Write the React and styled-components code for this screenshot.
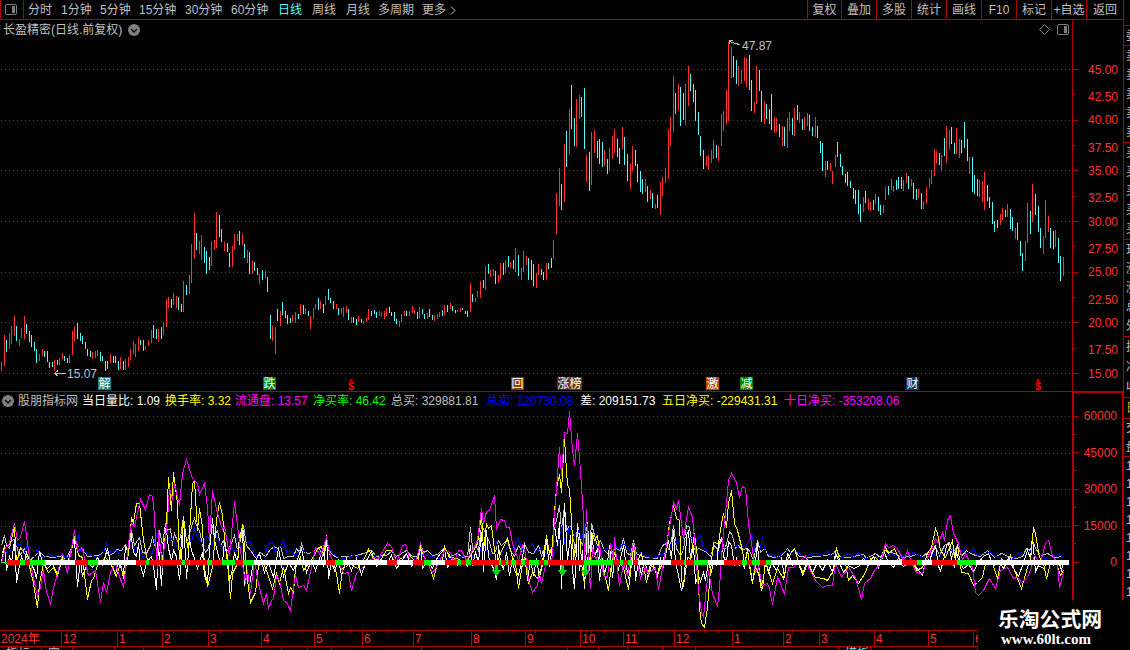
import * as React from "react"
import styled, { createGlobalStyle } from "styled-components"

// c = falling, r = rising: x,high,low
const BARS = `r1,362,371 r4,335,366 c6,340,352 r9,333,349 r11,326,344 r14,316,336 c16,326,341 r19,339,346 r21,328,338 r24,316,339
c26,324,334 c29,331,342 c31,335,347 c34,342,351 c36,349,363 r39,354,361 r42,349,356 c44,351,357 c47,351,362 c49,362,368
c52,362,367 r54,360,371 c57,360,365 r59,358,365 r62,353,359 c64,356,361 c67,358,363 r69,355,363 r72,331,355 r74,326,341
c77,323,339 c80,333,341 c82,336,344 c85,342,349 c87,349,356 c90,351,357 r92,352,359 r95,351,358 r97,350,356 c100,352,361
c102,356,361 c105,361,371 c107,361,369 r110,354,363 c113,356,363 c115,356,363 c118,361,370 r120,357,369 c123,361,370 r125,359,370
r128,357,367 r130,349,360 r133,341,354 r135,344,357 r138,337,351 c140,340,345 c143,340,351 r145,346,350 r148,340,346 r151,330,343
c153,325,338 c156,329,339 r158,329,342 c161,327,339 r163,322,335 r166,299,327 r168,297,308 c171,299,308 r173,293,305 r176,296,308
c178,297,310 c181,304,312 r183,281,312 c186,285,295 r189,275,294 r191,244,283 r194,213,259 c196,233,250 r199,241,254 r201,235,260
c204,247,263 c206,251,274 c209,257,270 r211,241,266 r214,240,250 r216,212,248 c219,215,237 c221,229,242 r224,242,251 c227,243,252
c229,253,267 r232,246,267 r234,234,250 r237,234,241 c239,231,245 r242,234,245 c244,244,258 r247,250,263 c249,252,274 r252,261,274
c254,262,271 c257,268,275 r259,274,284 c262,270,280 r265,271,278 c267,277,292 c270,315,339 r272,326,341 r275,327,354 c277,309,321
r280,311,326 c282,302,315 c285,311,318 c287,315,324 c290,318,323 r292,315,322 r295,312,323 c298,314,319 r300,304,315 c303,305,314
r305,308,314 c308,311,316 r310,316,329 r313,308,319 r315,304,309 c318,298,310 r320,301,309 c323,304,313 r325,296,305 c328,289,300
c330,298,303 c333,301,309 r336,304,309 c338,308,315 r341,308,314 r343,307,317 r346,306,313 c348,309,320 r351,317,323 c353,317,323
c356,319,325 r358,316,322 c361,319,323 r363,321,324 r366,318,322 r368,309,320 c371,311,316 c374,310,314 c376,312,318 r379,311,316
r381,312,317 r384,311,319 r386,308,316 c389,307,313 c391,312,316 c394,312,321 c396,319,324 r399,321,327 r401,314,322 r404,311,316
c406,311,316 r409,311,316 r412,306,313 r414,310,314 c417,312,319 r419,307,318 c422,309,314 c424,314,319 r427,313,319 c429,309,317
c432,315,320 r434,315,321 r437,314,319 r439,312,317 c442,310,316 r444,305,315 c447,305,312 r450,303,309 c452,306,311 c455,310,313
r457,310,312 r460,308,312 c462,308,310 c465,311,314 c467,311,317 r470,283,312 c472,294,302 r475,298,302 r477,291,297 r480,281,298
c483,280,288 r485,266,290 c488,264,274 r490,270,277 r493,269,276 c495,271,284 r498,275,283 r500,263,279 c503,263,275 r505,260,273
c508,256,267 r510,262,268 c513,260,269 r515,248,272 c518,255,276 r521,268,280 r523,251,272 r526,256,265 c528,258,280 c531,260,280
c533,264,286 r536,273,288 r538,264,275 c541,269,275 c543,272,280 r546,263,280 c548,263,269 c551,258,268 r553,240,259 r556,193,234
r559,168,206 c561,184,210 r564,144,202 c566,131,167 r569,109,155 c571,85,129 c574,118,146 r576,99,147 r579,95,119 c581,97,117
c584,88,149 r586,155,182 c589,152,191 r591,132,185 r594,130,153 c597,141,158 c599,139,164 c602,142,167 r604,150,166 c607,159,174
r609,148,171 r612,136,159 r614,129,153 c617,139,157 c619,148,164 r622,127,149 c624,137,165 c627,154,181 r630,164,189 r632,146,171
c635,150,166 c637,164,182 c640,171,192 c642,179,194 r645,179,192 c647,186,202 r650,190,199 c652,193,208 r655,204,209 c657,195,208
r660,182,215 r662,177,196 r665,168,183 r668,129,179 r670,117,146 r673,76,132 c675,93,114 r678,84,111 c680,87,126 c683,93,120
r685,84,125 r688,66,106 c690,74,91 c693,84,102 c695,90,121 c698,112,135 c700,136,156 c703,150,169 r706,156,166 r708,155,170
r711,150,163 r713,140,159 c716,145,158 r718,146,161 r721,114,146 r723,111,131 r726,90,125 r728,42,121 r731,47,78 c733,56,77
c736,60,84 r738,66,86 r741,70,84 r744,57,81 r746,58,87 c749,55,90 c751,80,111 r754,102,113 r756,66,104 c759,70,91
c761,91,122 r764,101,124 c766,104,119 c769,109,124 c771,94,130 r774,117,133 r776,118,132 c779,124,137 r782,126,146 c784,127,146
r787,118,148 r789,112,131 c792,118,135 r794,108,136 c797,105,120 r799,112,123 c802,119,130 r804,117,130 r807,113,126 c809,115,131
c812,127,136 r815,117,137 c817,126,138 c820,141,153 c822,143,171 r825,161,177 c827,161,170 r830,163,171 r832,171,184 r835,155,167
c837,142,157 c840,154,167 c842,166,175 c845,174,183 c847,172,186 c850,181,188 c853,188,199 c855,190,204 c858,190,214 c860,204,222
r863,197,212 c865,191,203 r868,199,210 r870,202,211 c873,200,210 r875,194,204 c878,197,211 c880,205,215 r883,205,213 r885,187,200
c888,186,195 r891,179,190 r893,186,192 c896,180,190 c898,177,189 c901,177,189 r903,180,191 r906,173,183 c908,176,189 r911,179,186
c913,183,199 c916,189,200 r918,189,198 c921,193,209 r923,201,209 r926,187,204 r929,178,188 r931,170,184 r934,149,176 r936,151,163
c939,153,165 r941,155,171 c944,138,156 r946,126,163 r949,130,149 c951,127,144 c954,143,154 r956,128,154 r959,139,158 c961,140,153
c964,122,148 c967,139,161 r969,157,174 c972,157,192 c974,175,194 c977,179,196 r979,180,197 r982,181,202 r984,172,210 c987,185,201
c989,197,208 c992,202,224 c994,221,232 c997,220,228 r1000,214,225 r1002,208,220 c1005,210,217 r1007,204,217 c1010,209,229 c1012,217,231
r1015,228,239 c1017,223,240 c1020,241,256 c1022,253,271 r1025,241,261 r1027,203,243 c1030,211,234 r1032,184,222 c1035,194,215 c1038,206,232
c1040,228,248 r1043,236,254 r1045,200,238 r1048,216,232 c1050,228,248 c1053,231,249 r1055,230,247 c1058,238,263 c1060,256,281 r1063,257,276`
  .split(/\s+/)
  .map(s => {
    const [x, high, low] = s.slice(1).split(",").map(Number)
    return { up: s[0] === "r", x, high, low }
  })

const LINES = [
  {
    name: "buy",
    color: "#c0c0c0",
    points:
      "1,545 4,535 6,545 9,548 11,540 14,539 16,545 19,555 24,548 29,560 34,556 39,551 44,556 52,557 60,556 67,556 72,545 74,537 77,545 82,548 87,556 97,555 102,553 105,548 108,555 113,553 116,549 121,550 125,544 128,552 131,530 134,545 137,540 139,537 142,552 146,553 150,545 152,536 154,545 157,550 159,530 162,545 165,523 167,530 170,528 172,545 174,533 177,541 180,537 183,516 185,535 187,540 190,530 192,523 194,518 196,525 199,530 202,545 205,552 208,548 212,525 214,535 217,530 220,545 223,540 226,552 230,545 234,535 237,550 240,540 243,525 246,545 250,550 255,557 260,552 265,556 270,549 274,546 277,548 280,545 283,558 288,556 293,556 296,548 299,552 301,543 304,552 309,553 314,550 319,548 322,555 326,536 328,548 331,553 336,557 346,556 356,555 366,552 371,550 376,556 386,555 391,551 396,556 401,553 406,550 412,556 417,556 420,544 423,552 427,550 432,555 437,554 444,547 450,556 457,553 462,557 467,556 470,527 472,548 475,545 478,550 481,525 484,530 486,535 489,542 492,553 495,552 498,540 501,545 504,542 507,540 510,550 514,556 518,545 521,550 524,543 528,552 533,553 538,545 541,555 546,540 549,552 552,545 554,525 556,520 559,505 561,530 564,505 566,530 569,525 572,530 575,552 577,523 579,535 582,545 584,535 587,525 589,548 591,523 594,535 597,545 600,540 604,550 609,555 615,548 620,550 623,538 626,552 630,555 633,540 636,553 641,556 648,557 657,558 662,545 666,543 668,548 671,540 673,525 676,548 680,555 683,550 686,525 689,527 692,545 695,550 698,548 703,550 706,552 710,556 714,545 718,550 721,538 724,550 727,540 729,531 732,535 735,548 738,545 742,550 745,548 749,550 753,560 757,540 760,552 764,548 768,556 775,557 781,555 787,548 790,552 794,550 799,556 808,557 816,556 826,555 833,553 836,549 839,556 848,557 858,555 863,554 866,558 875,553 880,557 884,550 890,552 895,553 901,557 910,556 916,554 922,556 927,552 932,553 935,546 939,555 944,545 947,543 949,542 952,555 957,545 961,556 966,550 972,554 980,556 987,550 994,557 1001,553 1008,556 1016,558 1022,556 1026,548 1030,550 1032,540 1035,548 1040,555 1047,553 1054,557 1063,556",
  },
  {
    name: "sell",
    color: "#0000ff",
    points:
      "1,550 5,553 9,550 13,549 17,543 21,545 23,553 27,545 31,548 34,551 37,549 40,555 44,557 48,553 53,556 60,555 68,557 73,542 75,545 78,534 80,550 84,551 87,553 91,554 95,557 100,555 103,552 106,543 108,552 112,551 116,550 120,555 124,551 127,547 131,540 135,552 138,548 142,557 147,553 152,553 154,540 157,532 160,547 165,540 169,537 173,540 177,547 180,545 183,533 187,542 192,538 194,528 197,537 202,543 207,535 211,547 215,533 218,540 223,550 227,552 230,545 235,552 239,547 242,542 245,543 250,541 254,555 260,557 265,552 268,543 272,542 275,552 279,547 283,540 286,552 290,550 295,555 300,550 303,550 308,555 312,551 317,550 322,553 327,545 332,553 338,557 345,558 353,555 362,558 368,557 377,555 383,557 390,557 400,557 407,556 415,558 419,555 423,553 428,555 437,558 447,558 457,557 467,555 477,557 482,543 485,548 490,555 496,542 500,553 504,551 507,547 513,548 518,538 523,552 528,547 532,543 535,552 542,547 547,555 553,555 557,543 562,525 565,547 569,525 573,537 577,528 581,540 584,527 587,535 590,546 593,537 598,552 603,550 608,547 613,543 618,548 623,543 627,547 632,553 637,550 643,555 650,557 657,556 663,553 668,547 673,540 677,543 682,533 687,537 692,538 696,540 700,535 703,547 708,553 715,555 722,547 727,547 733,547 740,545 745,547 748,540 752,535 755,555 759,550 762,537 765,552 770,555 777,557 785,550 788,553 795,550 802,555 807,555 815,553 822,555 827,550 832,557 835,555 840,557 848,553 853,557 858,552 863,558 873,557 883,558 890,553 897,557 907,555 913,552 922,557 930,553 937,555 945,552 952,550 958,553 964,548 970,552 973,548 977,555 983,553 990,552 997,557 1005,557 1012,558 1020,552 1027,555 1032,547 1037,552 1043,558 1052,557 1060,554 1063,558",
  },
  {
    name: "diff",
    color: "#ffffff",
    points:
      "1,562 4,545 6,570 9,556 11,562 14,540 16,582 19,565 21,556 24,563 26,552 29,560 34,570 36,578 39,551 42,562 47,568 52,563 57,574 62,556 67,563 72,545 74,540 77,586 80,560 82,576 87,562 92,567 97,557 102,565 107,548 110,563 115,574 118,560 123,575 125,545 128,553 130,530 133,552 136,556 138,543 140,565 143,575 146,562 151,556 153,566 156,589 158,545 161,585 163,545 166,530 168,548 171,560 173,550 176,556 179,579 181,560 183,517 186,578 189,538 191,550 194,558 197,568 199,561 202,552 204,575 207,583 209,550 212,518 214,540 216,547 219,560 222,562 224,540 227,556 229,581 232,568 234,552 237,562 239,535 242,528 244,585 247,570 249,585 252,566 254,562 259,553 264,572 268,562 273,577 278,548 283,576 288,562 293,570 298,556 301,548 306,572 311,560 315,570 320,555 323,566 326,535 328,578 331,562 334,570 338,560 341,575 346,558 351,570 356,558 361,574 366,560 371,551 376,566 381,559 386,564 391,555 396,568 401,561 406,553 411,566 416,560 420,545 422,568 427,560 432,568 437,557 444,548 447,567 452,558 457,565 462,560 467,566 470,545 472,565 475,552 478,562 481,532 483,571 486,530 488,556 490,562 493,568 496,579 498,545 500,562 503,568 506,552 509,575 512,558 514,570 518,575 521,562 524,545 527,580 530,560 533,575 536,558 539,577 543,560 546,540 549,566 552,545 554,525 557,545 559,522 561,588 564,503 567,560 570,535 572,568 574,588 577,525 579,570 582,550 584,588 587,522 589,568 591,532 594,556 597,548 599,580 602,558 604,573 607,562 609,545 612,577 615,552 618,570 620,558 623,545 625,560 628,578 631,562 633,540 635,580 638,562 641,574 644,560 648,575 652,562 657,577 660,558 663,566 666,550 668,540 671,558 673,530 675,562 678,575 681,590 684,578 686,535 688,530 690,560 693,545 695,583 698,575 700,581 703,572 705,580 708,562 711,572 713,560 716,565 718,545 721,537 723,556 726,562 728,541 731,545 734,565 736,558 739,565 742,560 744,568 747,548 750,572 752,583 755,562 757,542 759,575 762,588 765,560 768,572 771,562 776,570 781,558 784,577 787,553 789,556 792,565 797,560 802,574 807,560 812,572 817,562 822,570 827,560 832,572 835,552 838,560 843,572 848,565 853,568 858,566 863,558 868,564 873,556 878,567 883,550 888,562 893,567 898,558 903,566 911,560 918,570 922,575 926,555 929,562 932,550 935,545 938,566 940,570 943,560 946,545 948,543 951,558 954,567 956,552 959,562 963,568 968,564 973,571 978,562 983,556 988,553 993,566 998,560 1003,568 1008,558 1013,568 1018,576 1022,565 1027,550 1030,558 1032,535 1035,571 1038,565 1043,568 1048,560 1053,565 1058,560 1061,570 1063,562",
  },
  {
    name: "net5",
    color: "#ffff00",
    points:
      "1,553 5,547 10,543 14,527 16,563 20,547 24,553 27,558 30,570 33,583 37,607 39,583 43,563 48,572 53,567 57,575 62,558 68,563 74,537 78,555 82,557 87,599 91,580 93,578 97,565 105,557 110,563 116,575 120,563 123,578 128,553 131,518 133,522 136,503 139,503 143,540 147,560 152,562 156,560 158,535 162,562 166,523 168,477 171,510 173,472 177,503 179,565 183,517 186,540 188,550 191,500 192,483 194,480 197,530 199,508 202,527 204,567 207,586 212,567 216,520 219,502 222,515 224,537 227,563 230,598 232,573 237,563 239,543 242,524 245,557 247,580 250,602 255,592 258,565 263,563 267,573 272,588 276,573 279,583 283,567 288,593 290,587 293,592 295,567 300,557 303,570 308,563 314,555 317,548 321,546 323,555 326,537 329,553 333,562 336,573 339,593 342,568 345,567 349,563 357,568 363,560 368,549 373,558 380,560 386,550 392,550 396,561 402,557 407,552 412,558 417,563 420,546 424,558 428,563 433,578 437,563 442,560 444,546 449,557 457,558 465,563 472,552 477,543 481,513 483,550 486,523 488,528 491,525 494,550 496,565 500,553 507,538 512,557 515,563 518,588 522,563 524,557 528,583 532,572 537,578 541,567 546,535 549,553 552,547 553,523 556,488 559,474 561,492 563,453 564,439 567,485 569,488 572,537 573,560 577,533 579,533 582,573 584,583 587,557 589,570 592,533 594,540 597,535 600,563 604,573 608,590 611,563 614,553 618,562 623,567 628,589 633,547 637,560 641,553 646,582 650,563 657,573 662,563 666,547 669,523 673,505 676,518 679,520 681,580 683,585 687,557 690,558 694,533 697,557 699,607 701,623 704,627 707,607 710,570 713,542 718,543 721,523 723,513 726,527 728,503 731,490 734,523 737,530 742,550 744,563 747,550 752,582 755,567 758,573 761,590 765,563 768,570 772,583 777,568 783,578 787,560 790,553 794,548 798,562 803,573 807,563 815,577 823,578 827,580 833,570 836,547 839,560 845,563 848,580 852,575 858,583 865,572 870,558 875,557 880,563 885,547 888,553 894,548 898,557 905,563 911,560 916,570 922,567 927,553 931,547 935,528 937,533 940,550 945,557 952,540 954,557 957,545 961,572 968,573 973,585 977,582 982,577 985,563 992,563 997,578 1001,558 1007,563 1010,555 1014,570 1021,588 1027,567 1030,560 1033,527 1035,533 1039,557 1043,563 1046,578 1050,563 1055,560 1060,575 1063,570",
  },
  {
    name: "net10",
    color: "#ff00ff",
    points:
      "1,562 5,547 8,545 14,523 17,540 20,537 22,528 24,521 29,557 32,573 37,596 40,587 43,569 45,587 50,604 53,587 57,573 62,553 67,573 70,553 74,530 77,550 82,548 85,563 88,575 95,570 100,602 103,582 106,592 110,572 115,563 118,573 123,587 128,543 131,522 134,526 140,499 145,509 149,494 152,496 154,515 155,540 157,568 158,530 161,557 162,567 163,553 167,520 169,487 172,500 174,483 179,505 182,473 186,459 192,478 197,483 199,494 204,483 207,507 209,540 212,490 217,513 222,529 224,526 229,555 234,501 240,550 245,583 247,570 250,593 254,560 258,583 263,603 266,593 268,608 271,600 273,598 276,575 279,580 283,600 287,603 290,611 293,587 295,575 298,587 303,585 306,590 311,567 315,547 320,555 326,537 329,552 333,563 340,565 343,573 348,572 351,590 356,573 365,564 373,557 378,558 387,543 391,546 396,563 402,545 405,544 409,558 415,563 420,543 424,557 432,572 437,565 444,550 450,552 453,563 458,550 461,550 466,560 472,550 477,540 481,508 483,523 486,511 489,510 494,495 496,529 500,519 504,520 506,527 509,527 512,543 518,560 522,545 525,553 528,580 532,592 537,585 539,573 541,583 545,565 548,562 552,557 554,517 559,447 561,475 564,432 567,433 569,411 572,450 574,465 577,433 580,470 583,517 584,567 586,509 588,567 590,588 592,547 596,560 599,543 603,575 607,577 610,543 613,560 614,537 617,570 619,585 623,563 627,575 633,542 637,563 640,578 645,567 648,573 655,567 658,589 663,563 668,533 673,502 676,508 678,500 681,523 683,538 688,506 692,517 695,550 698,590 701,612 703,617 706,587 708,570 712,593 717,606 719,587 722,543 725,513 728,480 731,473 736,482 739,497 742,486 745,488 748,523 752,550 755,572 758,567 762,585 767,583 769,588 772,604 777,577 780,583 784,594 788,567 793,567 798,562 805,555 808,567 815,580 822,587 827,585 832,585 835,563 841,577 848,567 855,577 861,599 864,583 870,578 874,570 880,563 885,543 888,547 893,545 898,550 903,560 907,550 911,562 916,572 922,573 927,557 932,547 935,538 938,543 942,532 944,540 947,520 950,515 953,533 958,543 962,560 965,553 972,567 975,592 978,595 983,590 989,578 995,588 1000,570 1007,567 1013,578 1017,577 1021,582 1027,577 1031,567 1034,555 1040,563 1045,543 1048,540 1052,555 1057,563 1059,587 1063,572",
  },
]

// zero line ribbon, each run starts where the previous one ends
const RIBBON = [
  [7, "r"], [20, "g"], [25, "r"], [30, "g"], [45, "w"], [75, "r"], [88, "g"], [98, "w"], [136, "r"], [146, "g"],
  [149, "r"], [182, "g"], [185, "r"], [189, "g"], [190, "r"], [207, "g"], [212, "r"], [222, "g"], [235, "r"], [243, "g"],
  [254, "w"], [326, "r"], [335, "g"], [343, "w"], [387, "r"], [397, "w"], [413, "r"], [424, "g"], [431, "w"], [445, "r"],
  [457, "g"], [461, "r"], [466, "g"], [471, "r"], [499, "g"], [501, "r"], [506, "g"], [508, "r"], [511, "g"], [516, "r"],
  [521, "g"], [525, "r"], [529, "g"], [539, "r"], [544, "g"], [548, "r"], [584, "g"], [613, "r"], [620, "g"], [623, "r"],
  [628, "g"], [632, "w"], [633, "r"], [638, "w"], [671, "r"], [684, "g"], [686, "r"], [694, "g"], [708, "w"], [724, "r"],
  [742, "g"], [747, "r"], [752, "g"], [760, "r"], [766, "g"], [771, "w"], [902, "r"], [917, "g"], [922, "w"], [932, "r"],
  [957, "g"], [976, "w"], [1069, "w"],
]
const RIBBON_COLORS = { r: "#ff0000", g: "#00ff00", w: "#ffffff" }

const PERIODS = [
  ["分时", 33], ["1分钟", 39], ["5分钟", 39], ["15分钟", 46], ["30分钟", 46], ["60分钟", 47],
  ["日线", 34], ["周线", 34], ["月线", 32], ["多周期", 44], ["更多", 28],
]

const ACTIONS = [
  ["复权", 34], ["叠加", 35], ["多股", 35], ["统计", 35], ["画线", 35], ["F10", 35], ["标记", 35], ["+自选", 35], ["返回", 37],
]

const READINGS = [
  ["股朋指标网", "#c0c0c0", 64],
  ["当日量比: 1.09", "#ffffff", 83],
  ["换手率: 3.32", "#ffff00", 70],
  ["流通盘: 13.57", "#ff00ff", 78],
  ["净买率: 46.42", "#00ff00", 78],
  ["总买: 329881.81", "#c0c0c0", 95],
  ["总卖: 120730.08", "#0000ff", 94],
  ["差: 209151.73", "#ffffff", 82],
  ["五日净买: -229431.31", "#ffff00", 122],
  ["十日净买: -353208.06", "#ff00ff", 122],
]

const PRICES = [
  "45.00", "42.50", "40.00", "37.50", "35.00", "32.50", "30.00", "27.50", "25.00", "22.50", "20.00", "17.50", "15.00",
]
const VOLUMES = ["60000", "", "45000", "", "30000", "", "15000", "", "0"]

const BADGES = [
  ["解", 98, "#008080"], ["跌", 263, "#008000"], ["回", 511, "#804000"], ["涨", 557, "#602020"],
  ["榜", 569, "#604020"], ["激", 706, "#c04800"], ["减", 740, "#008000"], ["财", 906, "#003870"],
]

const MONTHS = [
  ["2024年", 0, 61], ["12", 61, 117], ["1", 117, 162], ["2", 162, 208], ["3", 208, 261], ["4", 261, 314],
  ["5", 314, 362], ["6", 362, 413], ["7", 413, 471], ["8", 471, 525], ["9", 525, 580], ["10", 580, 623],
  ["11", 623, 674], ["12", 674, 732], ["1", 732, 783], ["2", 783, 819], ["3", 819, 874], ["4", 874, 928],
  ["5", 928, 973], ["6", 973, 978],
]
const WEEK_TICKS = [
  75, 89, 103, 128, 140, 149, 173, 185, 198, 220, 235, 248, 274, 288, 301, 326, 338, 350, 375, 388, 400, 427, 442,
  457, 485, 498, 512, 535, 553, 563, 591, 604, 614, 638, 650, 661, 689, 704, 718, 747, 758, 770, 792, 802, 833, 847,
  861, 888, 901, 915, 939, 951, 962,
]

// bottom tabs, only their top edge is inside the window
const TABS = [
  ["指标", 42], ["窗", 31], ["", 42], ["", 29], ["", 138], ["", 26], ["", 24], ["", 90], ["", 146], ["", 31],
  ["", 29], ["", 35], ["", 33], ["", 143], ["模板", 32, "#54fcfc"], ["", 107],
]

const QUOTES = [
  { rows: ["委"], height: 19 },
  { rows: ["卖", "卖", "卖", "卖", "卖"], height: 96 },
  { rows: ["买", "买", "买", "买", "买"], height: 96 },
  { rows: ["现", "涨", "涨", "总", "外"], height: 96 },
  { rows: ["换", "净", "收"], height: 60 },
  { rows: ["日"], height: 20, color: "#c0c000" },
  { rows: ["交", "盘"], height: 37 },
  { rows: ["1", "1", "1", "1", "1", "1", "1", "1"], height: 144 },
]

const Grid = ({ levels, from }) => (
  <g stroke="#b00000" strokeDasharray="1 3">
    {levels.map(y => (
      <line key={y} x1={from} x2="1072" y1={y + 0.5} y2={y + 0.5} />
    ))}
  </g>
)

const PanelIcon = () => (
  <svg width="12" height="11" viewBox="0 0 12 11">
    <rect x="0.5" y="0.5" width="11" height="10" rx="1.5" fill="none" stroke="#808080" />
    <rect x="7" y="2" width="3" height="7" fill="#808080" />
  </svg>
)

const DropIcon = () => (
  <svg width="12" height="12" viewBox="0 0 12 12">
    <circle cx="6" cy="6" r="6" fill="#808080" />
    <path d="M3 5 L6 8 L9 5" fill="none" stroke="#101010" strokeWidth="1.5" />
  </svg>
)

const App = () => (
  <Screen>
    <GlobalStyle />
    <Main>
      <Toolbar>
        <IconCell>
          <PanelIcon />
        </IconCell>
        <Periods>
          {PERIODS.map(([label, w]) => (
            <Period key={label} $w={w} $active={label === "日线"}>
              {label}
            </Period>
          ))}
          <svg width="6" height="9" viewBox="0 0 6 9">
            <path d="M1 0.5 L5 4.5 L1 8.5" fill="none" stroke="#c0c0c0" />
          </svg>
        </Periods>
        {ACTIONS.map(([label, w]) => (
          <Action key={label} $w={w}>
            {label}
          </Action>
        ))}
      </Toolbar>

      <PricePane>
        <Plot>
          <svg width="1072" height="371" viewBox="0 20 1072 371" shapeRendering="crispEdges">
            <Grid from={1} levels={[69, 120, 170, 221, 272, 322, 373]} />
            {BARS.map(b => (
              <rect key={b.x} x={b.x} y={b.high} width="1" height={b.low - b.high} fill={b.up ? "#ff3232" : "#54fcfc"} />
            ))}
            <path
              d="M54.5 373.5 H66 M58 370.5 L54.5 373.5 L58 376 M733 40.5 H729.5 V44 M730 41.5 L735 43.5 L740 44.5"
              fill="none"
              stroke="#c0c0c0"
            />
          </svg>
          <Title>
            <span>长盈精密(日线.前复权)</span>
            <DropIcon />
          </Title>
          <PaneTools>
            <svg width="11" height="11" viewBox="0 0 11 11">
              <path d="M5.5 0.5 L10.5 5.5 L5.5 10.5 L0.5 5.5 Z" fill="none" stroke="#808080" />
            </svg>
            <PanelIcon />
          </PaneTools>
          <Mark $x={742} $y={19}>47.87</Mark>
          <Mark $x={67} $y={347}>15.07</Mark>
          {BADGES.map(([label, x, color]) => (
            <Badge key={label} $x={x} $color={color}>
              {label}
            </Badge>
          ))}
          <Dividend $x={348}>$</Dividend>
          <Dividend $x={1035}>$</Dividend>
        </Plot>
        <Scale $top={37} $line={1}>
          {PRICES.map((p, i) => (
            <ScaleRow key={p} $h={25.33} $minor={i % 2 === 1}>
              {p}
            </ScaleRow>
          ))}
        </Scale>
      </PricePane>

      <FlowPane>
        <Plot>
          <Readings>
            <DropIcon />
            {READINGS.map(([label, color, w]) => (
              <Reading key={label} $color={color} $w={w}>
                {label}
              </Reading>
            ))}
          </Readings>
          <svg width="1072" height="221" viewBox="0 409 1072 221" shapeRendering="crispEdges">
            <Grid from={1} levels={[416, 453, 489, 526]} />
            <g transform="translate(0.5 0.5)" fill="none">
              {LINES.map(l => (
                <polyline key={l.name} points={l.points} stroke={l.color} />
              ))}
            </g>
            <rect x="1" y="562" width="6" height="1" fill="#00ff00" />
            {RIBBON.slice(0, -1).map(([x, kind], i) => (
              <rect key={x} x={x} y="560" width={RIBBON[i + 1][0] - x} height="5" fill={RIBBON_COLORS[kind]} />
            ))}
            {[496, 562, 585].map(x => (
              <path key={x} d={`M${x - 1} 565 h3 v5 h3.5 l-5 6 l-5 -6 h3.5 z`} fill="#00d818" />
            ))}
          </svg>
        </Plot>
        <Scale $top={6} $line={2}>
          {VOLUMES.map((v, i) => (
            <ScaleRow key={i} $h={18.25} $minor={v === ""}>
              {v}
            </ScaleRow>
          ))}
        </Scale>
      </FlowPane>

      <TimeAxis>
        {MONTHS.map(([label, from, to]) => (
          <Month key={from} $w={to - from} $first={from === 0}>
            {label}
            {WEEK_TICKS.filter(t => t > from && t < to).map(t => (
              <WeekTick key={t} style={{ left: t - from - 1 }} />
            ))}
          </Month>
        ))}
      </TimeAxis>
      <Tabs>
        {TABS.map(([label, w, color], i) => (
          <Tab key={i} $w={w} $color={color}>
            {label}
          </Tab>
        ))}
      </Tabs>
    </Main>

    <Side>
      {QUOTES.map((q, i) => (
        <Quotes key={i} $h={q.height} $color={q.color}>
          {q.rows.map((row, n) => (
            <span key={n}>{row}</span>
          ))}
        </Quotes>
      ))}
    </Side>

    <Watermark>
      <SiteName>乐淘公式网</SiteName>
      <SiteUrl>www.60lt.com</SiteUrl>
    </Watermark>
  </Screen>
)

//style
const GlobalStyle = createGlobalStyle`
  body {
    margin: 0;
    background: #000;
    overflow: hidden;
  }
  * {
    box-sizing: border-box;
  }
  svg {
    display: block;
    flex: none;
  }
`

const Screen = styled.div`
  position: relative;
  display: flex;
  width: 1130px;
  height: 650px;
  overflow: hidden;
  background: #000;
  color: #c0c0c0;
  font: 12px/14px "Liberation Sans", "Noto Sans CJK SC", sans-serif;
  white-space: nowrap;
`

const Main = styled.div`
  display: flex;
  flex-direction: column;
  width: 1123px;
`

const Toolbar = styled.div`
  display: flex;
  height: 20px;
  border-bottom: 1px solid #b00000;
`

const IconCell = styled.div`
  display: flex;
  align-items: center;
  width: 24px;
  padding: 0 0 1px 4px;
  border: solid #b00000;
  border-width: 0 1px;
`

const Periods = styled.div`
  display: flex;
  flex: 1;
  align-items: center;
  padding: 1px 0 0 4px;
`

const Period = styled.span`
  width: ${p => p.$w}px;
  color: ${p => (p.$active ? "#54fcfc" : "#c0c0c0")};
`

const Action = styled.div`
  display: flex;
  align-items: center;
  justify-content: center;
  width: ${p => p.$w}px;
  padding-top: 1px;
  border-left: 1px solid #b00000;
`

const PricePane = styled.div`
  display: flex;
  height: 372px;
  border-bottom: 1px solid #b00000;
`

const FlowPane = styled.div`
  display: flex;
  height: 238px;
`

const Plot = styled.div`
  position: relative;
  width: 1072px;
`

const Title = styled.div`
  position: absolute;
  top: 3px;
  left: 3px;
  display: flex;
  align-items: center;
  gap: 5px;
  span {
    width: 120px;
  }
`

const PaneTools = styled.div`
  position: absolute;
  top: 4px;
  right: 3px;
  display: flex;
  gap: 7px;
`

const Mark = styled.span`
  position: absolute;
  left: ${p => p.$x}px;
  top: ${p => p.$y}px;
`

const Badge = styled.span`
  position: absolute;
  left: ${p => p.$x}px;
  top: 357px;
  width: 13px;
  height: 13px;
  color: #fff;
  line-height: 14px;
  text-align: center;
  background: ${p => p.$color};
`

const Dividend = styled.span`
  position: absolute;
  left: ${p => p.$x}px;
  top: 359px;
  width: 7px;
  color: #ff0000;
  font-size: 11px;
  font-weight: bold;
  &::before {
    content: "";
    position: absolute;
    top: 0;
    left: 0.5px;
    border: solid transparent;
    border-width: 0 2.5px 2px;
    border-bottom-color: #ff0000;
  }
`

const Scale = styled.div`
  display: flex;
  flex-direction: column;
  width: 51px;
  padding-top: ${p => p.$top + (p.$line > 1 ? 8 : 0)}px;
  border-left: ${p => p.$line}px solid #b00000;
  border-top: ${p => (p.$line > 1 ? "1px solid #b00000" : "0")};
  border-right: ${p => (p.$line > 1 ? "1px solid #b00000" : "0")};
  color: #ff3232;
`

const ScaleRow = styled.div`
  display: flex;
  flex: none;
  align-items: center;
  justify-content: space-between;
  height: ${p => p.$h}px;
  padding: ${p => (p.$minor ? 4 : 0)}px 5px 0 0;
  &::before {
    content: "";
    width: ${p => (p.$minor ? 2 : 5)}px;
    height: 1px;
    margin-bottom: ${p => (p.$minor ? 4 : 0)}px;
    background: #b00000;
  }
`

const Readings = styled.div`
  display: flex;
  align-items: center;
  height: 17px;
  padding-left: 2px;
`

const Reading = styled.span`
  width: ${p => p.$w}px;
  color: ${p => p.$color};
  &:nth-of-type(1) {
    margin-left: 4px;
  }
`

const TimeAxis = styled.div`
  display: flex;
  height: 17px;
  width: 978px;
  overflow: hidden;
  border: solid #b00000;
  border-width: 1px 0;
`

const Month = styled.div`
  position: relative;
  flex: none;
  width: ${p => p.$w}px;
  padding-left: 1px;
  border-left: ${p => (p.$first ? "0" : "1px solid #b00000")};
  color: #ff3232;
  line-height: 16px;
`

const WeekTick = styled.i`
  position: absolute;
  top: 0;
  width: 1px;
  height: 2px;
  background: #b00000;
`

const Tabs = styled.div`
  display: flex;
  height: 3px;
  width: 978px;
  overflow: hidden;
`

const Tab = styled.div`
  flex: none;
  width: ${p => p.$w}px;
  padding-left: 6px;
  border-right: 1px solid #b00000;
  color: ${p => p.$color || "#c0c0c0"};
`

const Side = styled.div`
  width: 7px;
  height: 600px;
  padding-top: 25px;
  border-left: 1px solid #b00000;
  overflow: hidden;
`

const Quotes = styled.div`
  display: flex;
  flex-direction: column;
  justify-content: space-around;
  height: ${p => p.$h + 1}px;
  padding-left: 2px;
  border-top: 1px solid #b00000;
  color: ${p => p.$color || "#c0c0c0"};
`

const Watermark = styled.div`
  position: absolute;
  left: 978px;
  top: 600px;
  width: 152px;
  height: 50px;
  padding-top: 6px;
  background: #000;
  color: #fff;
`

const SiteName = styled.div`
  padding-left: 20px;
  font: bold 20.8px/24px "Noto Sans CJK SC", sans-serif;
`

const SiteUrl = styled.div`
  padding: 1px 0 0 23px;
  font: bold 15px/16px "Liberation Serif", serif;
`

export default App
